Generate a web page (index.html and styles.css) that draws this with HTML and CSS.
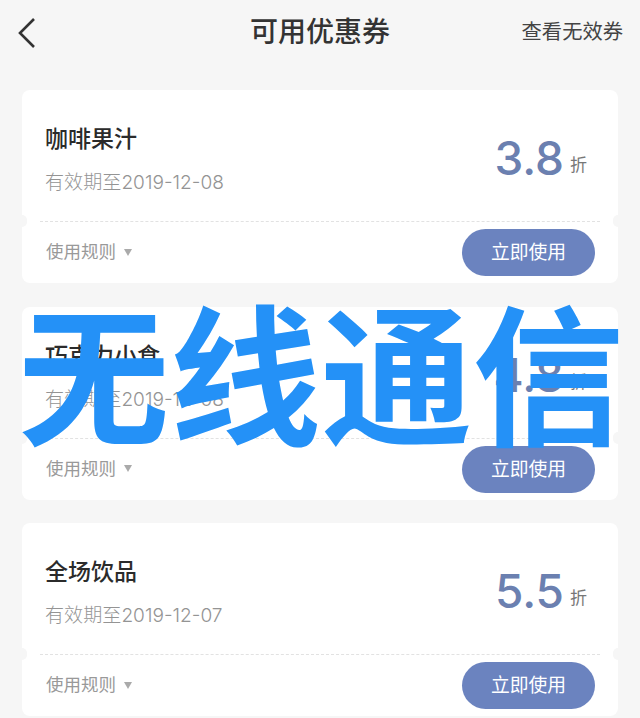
FILE: index.html
```html
<!DOCTYPE html>
<html lang="zh-CN">
<head>
  <meta charset="UTF-8" />
  <meta name="viewport" content="width=device-width, initial-scale=1.0"/>
  <title>可用优惠券</title>
  <link rel="stylesheet" href="styles.css">
</head>
<body>
  <header class="topbar">
    <svg class="back" width="20" height="32" viewBox="0 0 20 32"><path d="M17 2 L3 16 L17 30" fill="none" stroke="#333" stroke-width="2.6"/></svg>
    <h1>可用优惠券</h1>
    <a class="invalid">查看无效券</a>
  </header>

  <main class="list">
    <section class="card">
      <div class="card-top">
        <div>
          <h2>咖啡果汁</h2>
          <p class="expire">有效期至2019-12-08</p>
        </div>
        <div class="discount"><b>3.8</b><span>折</span></div>
      </div>
      <div class="card-bottom">
        <span class="rules">使用规则<i></i></span>
        <button>立即使用</button>
      </div>
    </section>

    <section class="card">
      <div class="card-top">
        <div>
          <h2>巧克力小食</h2>
          <p class="expire">有效期至2019-12-08</p>
        </div>
        <div class="discount"><b>4.8</b><span>折</span></div>
      </div>
      <div class="card-bottom">
        <span class="rules">使用规则<i></i></span>
        <button>立即使用</button>
      </div>
    </section>

    <section class="card">
      <div class="card-top">
        <div>
          <h2>全场饮品</h2>
          <p class="expire">有效期至2019-12-07</p>
        </div>
        <div class="discount"><b>5.5</b><span>折</span></div>
      </div>
      <div class="card-bottom">
        <span class="rules">使用规则<i></i></span>
        <button>立即使用</button>
      </div>
    </section>
  </main>

  <div class="watermark">无线通信</div>
</body>
</html>
```

FILE: styles.css
```css
html, body { height: 718px; overflow: hidden; }
body { margin: 0; background: #f6f6f6; color: #333; font-family: "Liberation Sans", "Noto Sans CJK SC", sans-serif; }

.topbar { position: relative; height: 90px; display: flex; align-items: flex-start; justify-content: center; }
.topbar h1 { margin: 14px 0 0; font-size: 28px; line-height: 38px; font-weight: 500; }
.back { position: absolute; left: 17px; top: 17px; }
.invalid { position: absolute; right: 17px; top: 18px; font-size: 20.3px; line-height: 28px; color: #444; }

.list { display: flex; flex-direction: column; gap: 23.5px; padding: 0 22px; }
.card { height: 193px; background: #fff; border-radius: 8px; position: relative; }
.card::before, .card::after { content: ""; position: absolute; top: 125px; width: 5px; height: 12px; background: #f6f6f6; }
.card::before { left: 0; border-radius: 0 6px 6px 0; }
.card::after { right: 0; border-radius: 6px 0 0 6px; }

.card-top { height: 131px; margin: 0 18px; padding: 0 5px; border-bottom: 1px dashed #e2e2e2; display: flex; justify-content: space-between; }
.card-top h2 { margin: 33px 0 0; font-size: 23px; line-height: 32px; font-weight: 500; color: #2b2b2b; }
.expire { margin: 14px 0 0; font-family: "Inter", "Noto Sans CJK SC", sans-serif; font-size: 19.1px; line-height: 26px; font-weight: 300; color: #949494; }
.discount { margin: 39px 8px 0 0; display: flex; align-items: flex-start; }
.discount b { font-family: "Inter", sans-serif; font-size: 46px; line-height: 58px; font-weight: 500; color: #6b80b0; }
.discount span { margin: 25px 0 0 6px; font-size: 17px; line-height: 24px; color: #777; }

.card-bottom { height: 61px; padding: 7px 23px 0 24px; display: flex; justify-content: space-between; align-items: flex-start; }
.rules { display: flex; align-items: center; margin-top: 10px; font-size: 17.5px; line-height: 26px; color: #999; }
.rules i { margin-left: 8px; border-top: 7px solid #aaa; border-left: 4px solid transparent; border-right: 4px solid transparent; }
button { width: 133px; height: 47px; border: none; border-radius: 24px; background: #6b83bf; color: #fff; font-family: inherit; font-size: 18.8px; line-height: 47px; padding: 0 0 1px; }

.watermark { position: absolute; left: 18px; top: 273px; width: 610px; font-family: "Noto Sans CJK SC", sans-serif; font-size: 151.5px; line-height: 190px; font-weight: 700; color: #2491f7; white-space: nowrap; }
```
